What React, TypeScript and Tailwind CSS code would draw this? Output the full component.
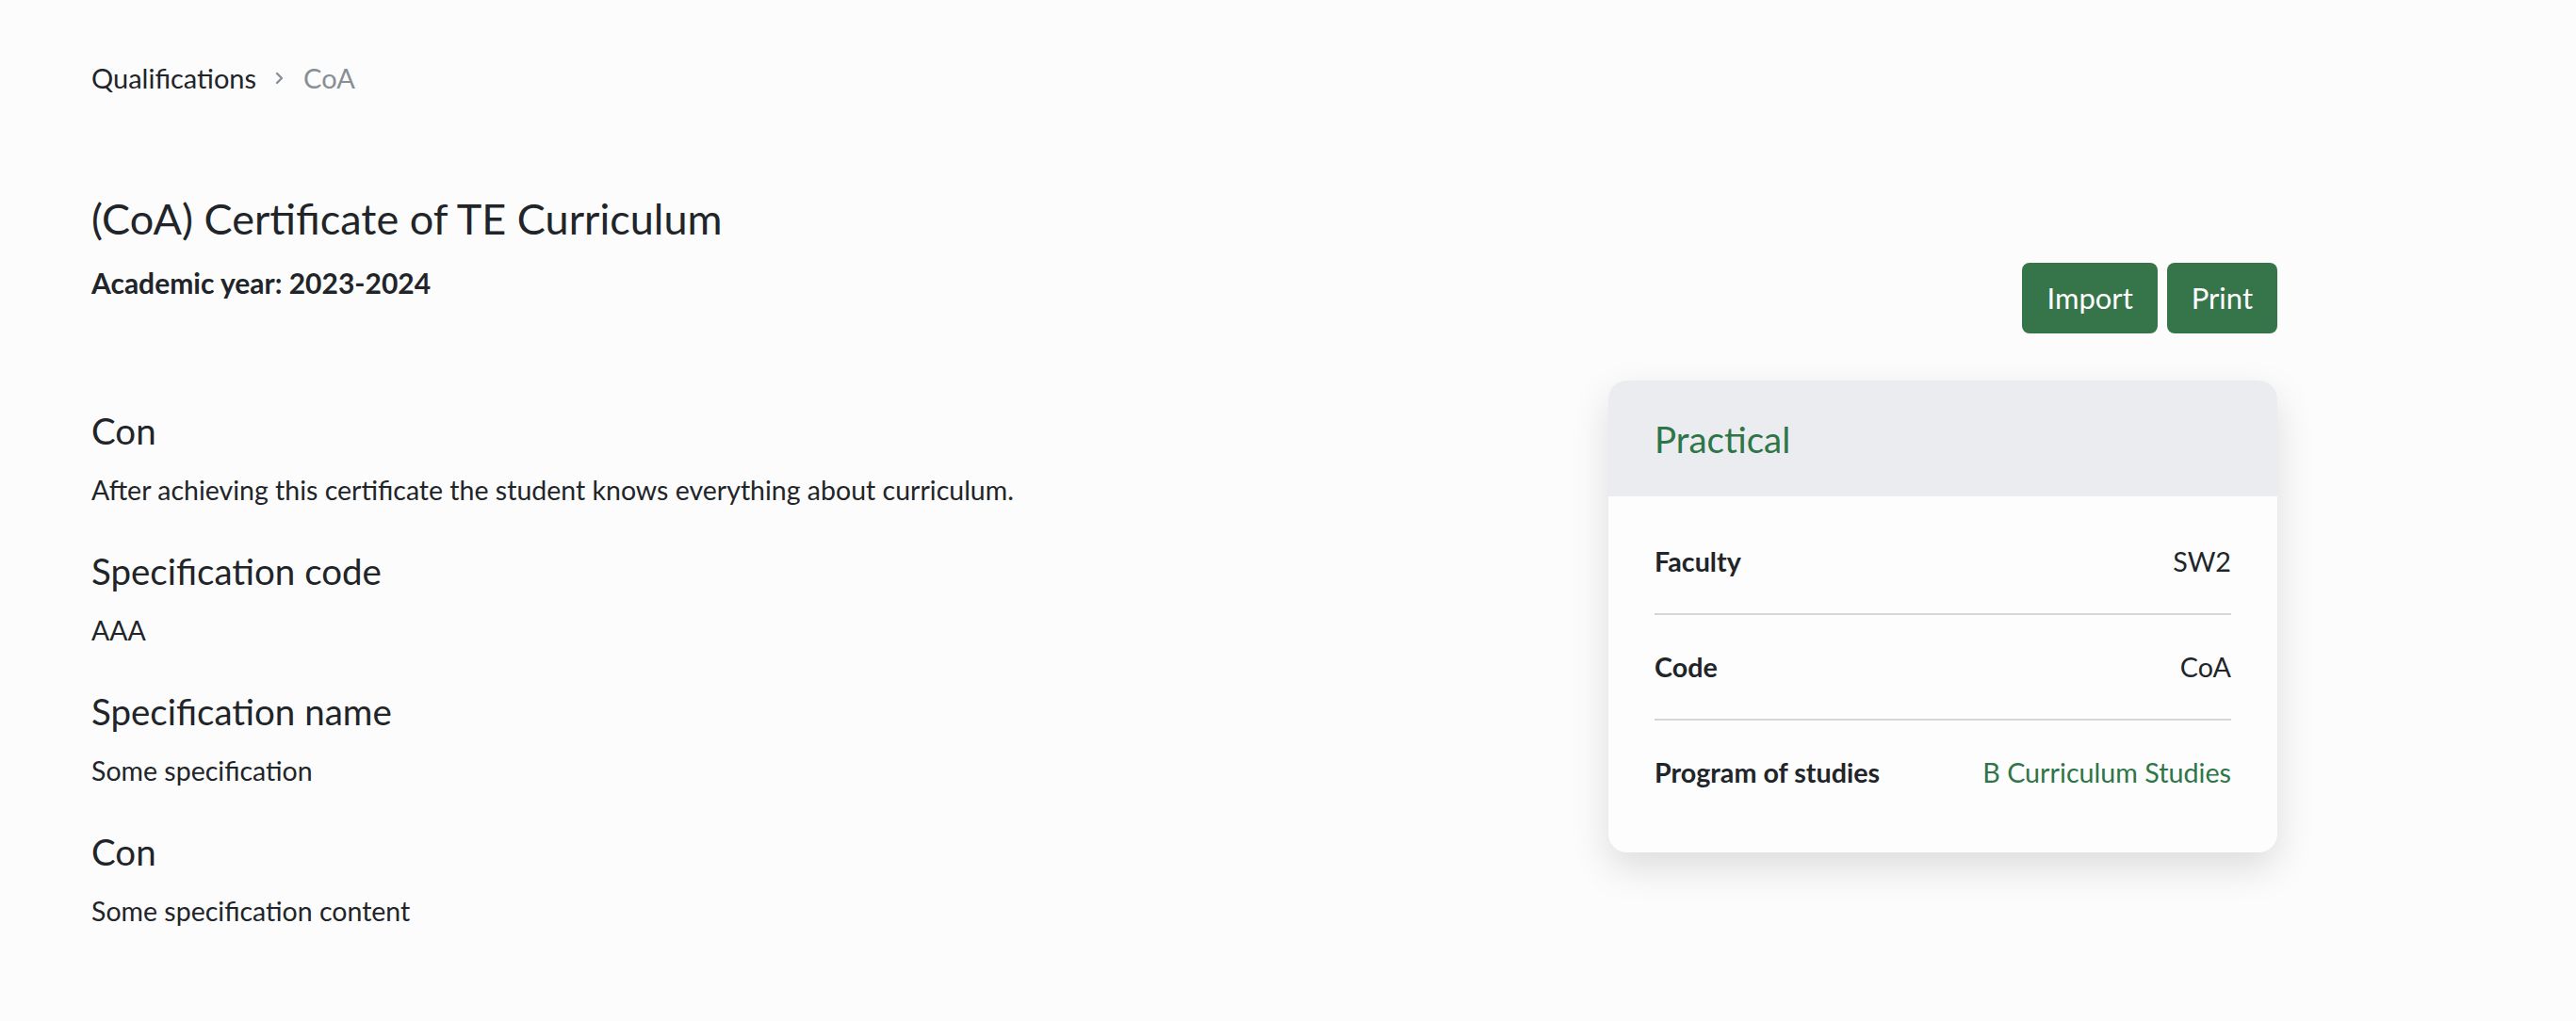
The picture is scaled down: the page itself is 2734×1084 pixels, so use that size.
import { Fragment } from "react";

const sections = [
  { title: "Con", body: "After achieving this certificate the student knows everything about curriculum." },
  { title: "Specification code", body: "AAA" },
  { title: "Specification name", body: "Some specification" },
  { title: "Con", body: "Some specification content" },
];

const details = [
  { label: "Faculty", value: "SW2" },
  { label: "Code", value: "CoA" },
  { label: "Program of studies", value: "B Curriculum Studies", link: true },
];

const App = () => {
  return (
    <div className="min-h-screen w-full bg-[#fcfcfc] font-['Lato',sans-serif] text-[#212529]">
      <div className="w-[2417px] pl-[97px] pt-[60px]">
        {/* breadcrumb */}
        <nav className="flex items-center gap-[20px] text-[29px] leading-[45px]">
          <span>Qualifications</span>
          <svg width="10" height="14" viewBox="0 0 10 14" className="text-[#8a9098]">
            <path d="M2 2l5 5-5 5" fill="none" stroke="currentColor" strokeWidth="2.4" strokeLinecap="round" strokeLinejoin="round" />
          </svg>
          <span className="text-[#868e96]">CoA</span>
        </nav>

        <div className="mt-[97px] flex items-start justify-between">
          <div>
            <h1 className="text-[45px] leading-[60px]">(CoA) Certificate of TE Curriculum</h1>
            <p className="mt-[18px] text-[30px] font-bold leading-[40px]">Academic year: 2023-2024</p>
          </div>
          <div className="mt-[77px] flex gap-[10px]">
            <button className="h-[75px] rounded-[8px] bg-[#36754a] px-[26px] text-[31px] text-white">Import</button>
            <button className="h-[75px] rounded-[8px] bg-[#36754a] px-[26px] text-[31px] text-white">Print</button>
          </div>
        </div>

        <div className="mt-[50px] flex items-start justify-between">
          <div className="pt-[28px]">
            {sections.map((s, i) => (
              <section key={i} className={i > 0 ? "mt-[41px]" : ""}>
                <h2 className="text-[38.5px] leading-[50px]">{s.title}</h2>
                <p className="mt-[18px] text-[28.5px] leading-[40px]">{s.body}</p>
              </section>
            ))}
          </div>

          <div className="w-[710px] overflow-hidden rounded-[20px] bg-[#fdfdfd] shadow-[0_16px_40px_rgba(0,0,0,0.13)]">
            <div className="flex h-[123px] items-center bg-[#ebecef] px-[49px]">
              <h3 className="text-[38.5px] leading-[50px] text-[#2e7547]">Practical</h3>
            </div>
            <div className="px-[49px] pb-[30px] pt-[14px]">
              {details.map((d, i) => (
                <Fragment key={d.label}>
                  {i > 0 && <div className="h-[2px] bg-[#d5d5da]" />}
                  <div className="flex items-center justify-between py-[35px] text-[28.7px] leading-[40px]">
                    <span className="font-bold">{d.label}</span>
                    <span className={d.link ? "text-[#2e7547]" : ""}>{d.value}</span>
                  </div>
                </Fragment>
              ))}
            </div>
          </div>
        </div>
      </div>
    </div>
  );
};

export default App;
